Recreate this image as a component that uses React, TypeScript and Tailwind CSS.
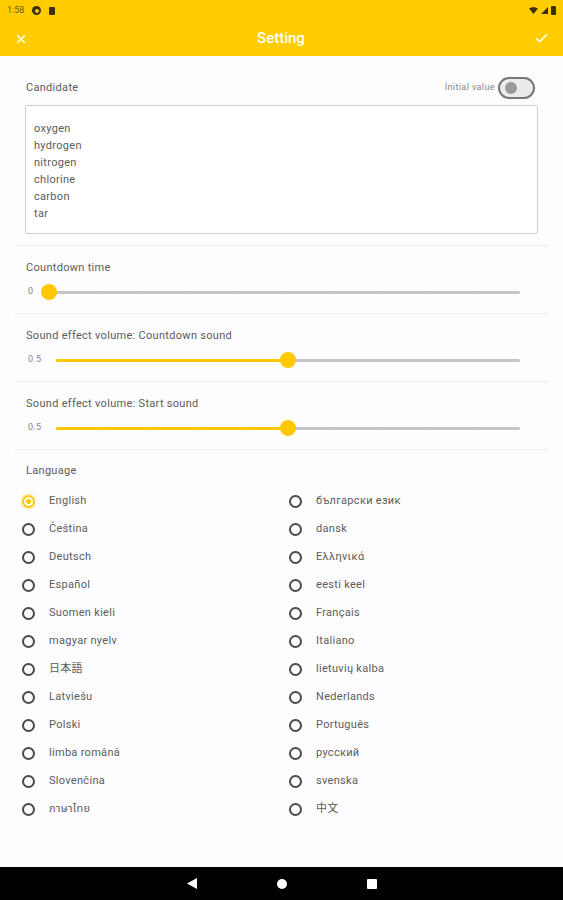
import { X, Check } from "lucide-react";

const candidates = ["oxygen", "hydrogen", "nitrogen", "chlorine", "carbon", "tar"];

const languages: [string, string][] = [
  ["English", "български език"],
  ["Čeština", "dansk"],
  ["Deutsch", "Ελληνικά"],
  ["Español", "eesti keel"],
  ["Suomen kieli", "Français"],
  ["magyar nyelv", "Italiano"],
  ["日本語", "lietuvių kalba"],
  ["Latviešu", "Nederlands"],
  ["Polski", "Português"],
  ["limba română", "русский"],
  ["Slovenčina", "svenska"],
  ["ภาษาไทย", "中文"],
];

const font = {
  fontFamily: 'Roboto, "Noto Sans", "Noto Sans CJK JP", "Noto Sans Thai", sans-serif',
};

function StatusBar() {
  return (
    <div className="flex h-[21px] items-center justify-between px-[7px] text-[9px] text-[#6b5a00]">
      <div className="flex items-center gap-[8px]">
        <span>1:58</span>
        <span className="flex size-[9px] items-center justify-center rounded-full bg-[#3a3000]">
          <span className="size-[4px] rounded-full bg-[#ffcc00]" />
        </span>
        <span className="h-[8px] w-[6px] rounded-[1px] bg-[#3a3000]" />
      </div>
      <div className="flex items-center gap-[3px]">
        <svg width="9" height="7" viewBox="0 0 9 7">
          <path d="M0 1.5 Q4.5 -1.5 9 1.5 L4.5 7 Z" fill="#3a3000" />
        </svg>
        <svg width="7" height="7" viewBox="0 0 7 7">
          <path d="M7 0 L7 7 L0 7 Z" fill="#3a3000" />
        </svg>
        <span className="h-[9px] w-[5px] rounded-[1px] bg-[#3a3000]" />
      </div>
    </div>
  );
}

function Slider({ label, value }: { label: string; value: number }) {
  const ticks = Array.from({ length: 9 }, (_, i) => (i + 1) * 10);
  return (
    <div className="flex h-4 items-center pl-[13px] pr-[28px]">
      <span className="text-[9px] tracking-[0.3px] text-[#888]">{label}</span>
      <div className={`relative h-[3px] flex-1 rounded-full bg-[#c6c6c6] ${label === "0" ? "ml-[16px]" : "ml-[15px]"}`}>
        <div className="absolute inset-y-0 left-0 rounded-full bg-[#ffc800]" style={{ width: `${value * 100}%` }} />
        {ticks.map((t) => (
          <span
            key={t}
            className={`absolute top-[1px] size-[1px] ${t < value * 100 ? "bg-[#f0b800]" : "bg-[#d8d2b0]"}`}
            style={{ left: `${t}%` }}
          />
        ))}
        <span
          className="absolute top-1/2 size-4 -translate-x-1/2 -translate-y-1/2 rounded-full bg-[#ffc800]"
          style={{ left: `${value * 100}%` }}
        />
      </div>
    </div>
  );
}

function SliderSection({ title, label, value }: { title: string; label: string; value: number }) {
  return (
    <section className="border-b border-[#efecef] pt-[15px] pb-[13px]">
      <div className="flex h-[14px] items-center pl-[11px] text-[11px] tracking-[0.3px] text-[#5c5c5c]">{title}</div>
      <div className="mt-[9px]">
        <Slider label={label} value={value} />
      </div>
    </section>
  );
}

function Radio({ text, checked }: { text: string; checked?: boolean }) {
  return (
    <div className="flex h-[28px] items-center">
      {checked ? (
        <span className="flex size-[13px] items-center justify-center rounded-full border-2 border-[#ffc800] shadow-[0_0_0_2px_rgba(255,200,0,0.18)]">
          <span className="size-[5px] rounded-full bg-[#ffc800]" />
        </span>
      ) : (
        <span className="size-[13px] rounded-full border-2 border-[#4a4a4a]" />
      )}
      <span className="ml-[14px] text-[11px] tracking-[0.3px] text-[#5c5c5c]">{text}</span>
    </div>
  );
}

export default function App() {
  return (
    <div className="flex h-[900px] w-[563px] flex-col bg-[#fdfcfe]" style={font}>
      <header className="bg-[#ffcc00]">
        <StatusBar />
        <div className="flex h-[35px] items-center justify-between px-[14px] text-white">
          <X className="size-[14px]" strokeWidth={2.5} />
          <h1 className="text-[15px] font-medium">Setting</h1>
          <Check className="size-[15px]" strokeWidth={2.5} />
        </div>
      </header>

      <main className="flex-1 px-[15px]">
        <section className="border-b border-[#efecef] pt-[21px] pb-[11px]">
          <div className="flex h-[22px] items-center justify-between pl-[11px] pr-[13px]">
            <span className="text-[11px] tracking-[0.3px] text-[#5c5c5c]">Candidate</span>
            <div className="flex items-center gap-[3px]">
              <span className="text-[9px] tracking-[0.4px] text-[#888]">Initial value</span>
              <span className="flex h-[22px] w-[37px] items-center rounded-full border-2 border-[#777] bg-[#eceaec] pl-[5px]">
                <span className="size-[12px] rounded-full bg-[#9a9a9a]" />
              </span>
            </div>
          </div>
          <div className="mt-[6px] ml-[10px] mr-[10px] h-[129px] rounded-[2px] border border-[#cfcfcf] bg-white pt-[14px] pl-[8px]">
            {candidates.map((c) => (
              <div key={c} className="h-[17px] text-[11px] leading-[17px] tracking-[0.3px] text-[#5c5c5c]">
                {c}
              </div>
            ))}
          </div>
        </section>

        <SliderSection title="Countdown time" label="0" value={0} />
        <SliderSection title="Sound effect volume: Countdown sound" label="0.5" value={0.5} />
        <SliderSection title="Sound effect volume: Start sound" label="0.5" value={0.5} />

        <section className="pt-[14px]">
          <div className="flex h-[14px] items-center pl-[11px] text-[11px] tracking-[0.3px] text-[#5c5c5c]">Language</div>
          <div className="mt-[9px] grid grid-cols-[267px_1fr] pl-[7px]">
            {languages.map(([left, right], i) => (
              <div key={left} className="contents">
                <Radio text={left} checked={i === 0} />
                <Radio text={right} />
              </div>
            ))}
          </div>
        </section>
      </main>

      <nav className="flex h-[33px] items-center justify-center bg-black">
        <div className="flex items-center gap-[80px]">
          <svg width="10" height="11" viewBox="0 0 10 11">
            <path d="M10 0 L10 11 L0 5.5 Z" fill="white" />
          </svg>
          <span className="size-[10px] rounded-full bg-white" />
          <span className="size-[10px] rounded-[1px] bg-white" />
        </div>
      </nav>
    </div>
  );
}
